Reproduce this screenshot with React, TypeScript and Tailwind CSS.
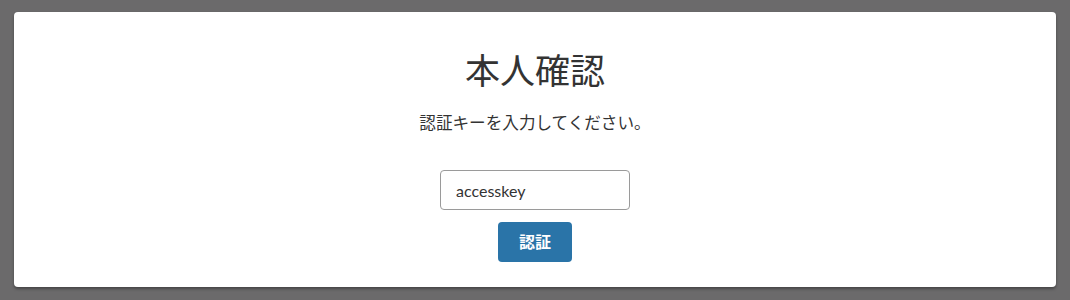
import { useState } from 'react';

const jpFont = "font-['Lato','Noto_Sans_CJK_JP',sans-serif]";

export default function App(): JSX.Element {
    const [key, setKey] = useState('accesskey');

    return (
        <div className={`min-h-[300px] bg-[#6b6a6b] px-[14px] pt-[12px] pb-[13px] ${jpFont}`}>
            <div className="flex flex-col items-center rounded-[4px] bg-white pt-[34px] pb-[25px] text-[#333333] shadow-[0_2px_3px_rgba(0,0,0,0.35)]">
                <h1 className="text-[35px] leading-[48px] font-normal">本人確認</h1>
                <p className="mt-[17px] text-[16.6px] leading-[24px]">認証キーを入力してください。</p>
                <input
                    value={key}
                    onChange={(e) => setKey(e.target.value)}
                    className="mt-[35px] h-[40px] w-[190px] rounded-[4px] border border-[#9a9a9a] bg-white px-[15px] text-[16px] text-[#333333] outline-none"
                />
                <button
                    type="button"
                    className="mt-[12px] h-[40px] w-[74px] rounded-[4px] bg-[#2a74a8] text-[16px] font-bold text-white"
                >
                    認証
                </button>
            </div>
        </div>
    );
}
